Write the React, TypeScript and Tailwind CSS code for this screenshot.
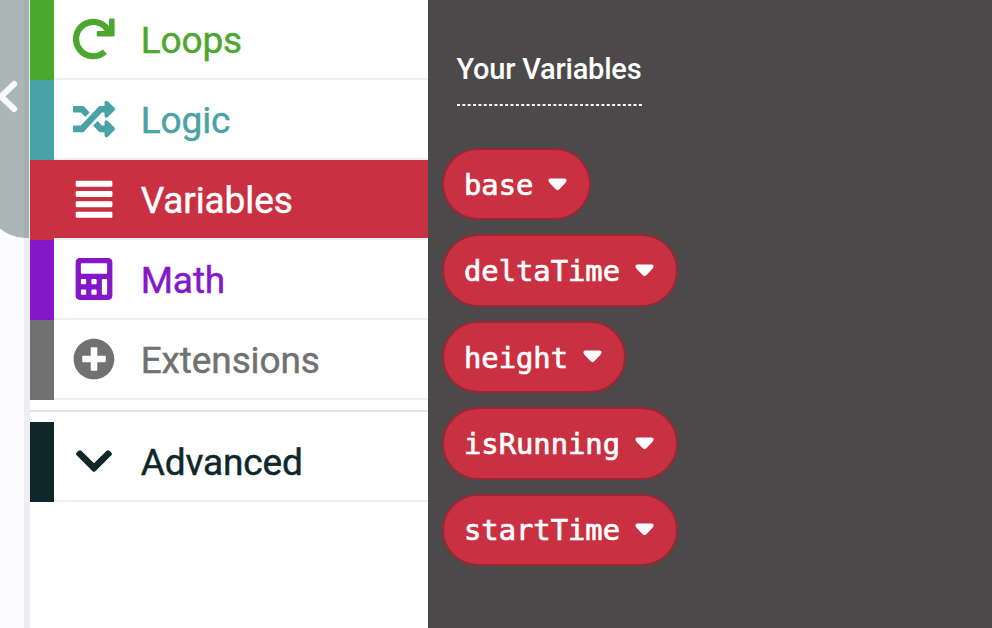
import type { ReactNode } from "react";
import { FaCalculator, FaChevronDown, FaPlusCircle, FaRandom } from "react-icons/fa";

type Category = {
  label: string;
  icon: ReactNode;
  text: string;
  bar: string;
  selected?: boolean;
};

function LoopIcon() {
  return (
    <svg className="size-[42px]" viewBox="0 0 42 42" fill="none">
      <path
        d="M31.8 33.8A17.2 17.2 0 1 1 35 12.2"
        stroke="currentColor"
        strokeWidth="6.2"
        strokeLinejoin="round"
      />
      <path
        d="M37 .6h3.6q1 0 1 1v16q0 1-1 1H24.700q-1 0-1-1v-3.500q0-1 1-1h8.500L36 10V1.600q0-1 1-1Z"
        fill="currentColor"
      />
    </svg>
  );
}

function ListIcon() {
  return (
    <svg className="size-[42px]" viewBox="0 0 42 42" fill="currentColor">
      <rect x="2.700" y="2.700" width="36.700" height="6" rx="1.300" />
      <rect x="2.700" y="13" width="36.700" height="6" rx="1.300" />
      <rect x="2.700" y="23.300" width="36.700" height="6" rx="1.300" />
      <rect x="2.700" y="33.700" width="36.700" height="6" rx="1.300" />
    </svg>
  );
}

const categories: Category[] = [
  { label: "Loops", icon: <LoopIcon />, text: "text-[#4ca72e]", bar: "bg-[#4ca72e]" },
  { label: "Logic", icon: <FaRandom />, text: "text-[#49a2a6]", bar: "bg-[#49a2a6]" },
  { label: "Variables", icon: <ListIcon />, text: "text-white", bar: "bg-[#c93143]", selected: true },
  { label: "Math", icon: <FaCalculator />, text: "text-[#8517c9]", bar: "bg-[#8517c9]" },
  { label: "Extensions", icon: <FaPlusCircle />, text: "text-[#717171]", bar: "bg-[#717171]" },
];

const advanced: Category = {
  label: "Advanced",
  icon: <FaChevronDown />,
  text: "text-[#0e272b]",
  bar: "bg-[#0e272b]",
};

const variables = ["base", "deltaTime", "height", "isRunning", "startTime"];

function Row({ item }: { item: Category }) {
  return (
    <div className={`flex h-20 ${item.text}`}>
      <div className={`w-6 shrink-0 ${item.bar}`} />
      <div className={`flex flex-1 items-center border-b-2 border-[#eceff0] ${item.selected ? "bg-[#c93143]" : "bg-white"}`}>
        <span className="flex w-[80.5px] justify-center pt-[0.5px] text-[42px]">{item.icon}</span>
        <span className="ml-[6.2px] pt-[3px] text-[37px] leading-none tracking-[-0.12px] [-webkit-text-stroke:0.45px_currentColor]">
          {item.label}
        </span>
      </div>
    </div>
  );
}

function Pill({ name }: { name: string }) {
  return (
    <div className="flex h-[72.400px] items-center gap-[15px] rounded-full border-2 border-[#9c2734] bg-[#c93143] pr-[22px] pl-[20px] text-white">
      <span className="pt-[2px] font-['DejaVu_Sans_Mono',monospace] text-[28.8px] leading-none [-webkit-text-stroke:0.7px_white]">
        {name}
      </span>
      <svg className="h-[13px] w-[19px]" viewBox="0 0 19 13">
        <path
          d="M2 .5H17Q20 1.5 17.5 4.7L11.6 11Q9.5 13.3 7.4 11L1.5 4.7Q-1 1.5 2 .5Z"
          fill="currentColor"
        />
      </svg>
    </div>
  );
}

export default function App() {
  return (
    <div className="flex h-[628px] w-[992px] overflow-hidden bg-white font-[Roboto,sans-serif]">
      <div className="relative w-[30px] shrink-0 border-r-[6px] border-[#eeeef1] bg-[#fcfcff]">
        <div className="absolute top-0 -left-[14px] flex h-[238px] w-[43px] justify-between overflow-hidden rounded-bl-[40px] bg-[#abb6b6] pl-[14px]">
          <svg className="mt-[80px] h-[33px] w-[18px] shrink-0" viewBox="0 0 18 33">
            <path d="M14.200 4L1 16.500L14.200 29" fill="none" stroke="#f7f8fb" strokeWidth="6" strokeLinecap="round" />
          </svg>
          <div className="w-[5px] bg-[#a5afaf]" />
        </div>
      </div>
      <nav className="w-[398px] shrink-0">
        {categories.map((c) => (
          <Row key={c.label} item={c} />
        ))}
        <div className="mt-[10px] mb-[10px] h-[2px] bg-[#e3e4e5]" />
        <Row item={advanced} />
      </nav>
      <main className="flex-1 bg-[#4b4949] pl-[14px]">
        <h2 className="mt-[50px] ml-[14.5px] h-[56px] w-[186px] text-[29px] leading-[39px] font-medium tracking-[-0.22px] whitespace-nowrap text-white">
          Your Variables
          <svg className="mt-[15px] block h-[2px] w-[186px]">
            <path d="M0 1H185" stroke="white" strokeWidth="2" strokeDasharray="3 2.35" />
          </svg>
        </h2>
        <div className="mt-[42px] flex flex-col items-start gap-[14px]">
          {variables.map((v) => (
            <Pill key={v} name={v} />
          ))}
        </div>
      </main>
    </div>
  );
}
